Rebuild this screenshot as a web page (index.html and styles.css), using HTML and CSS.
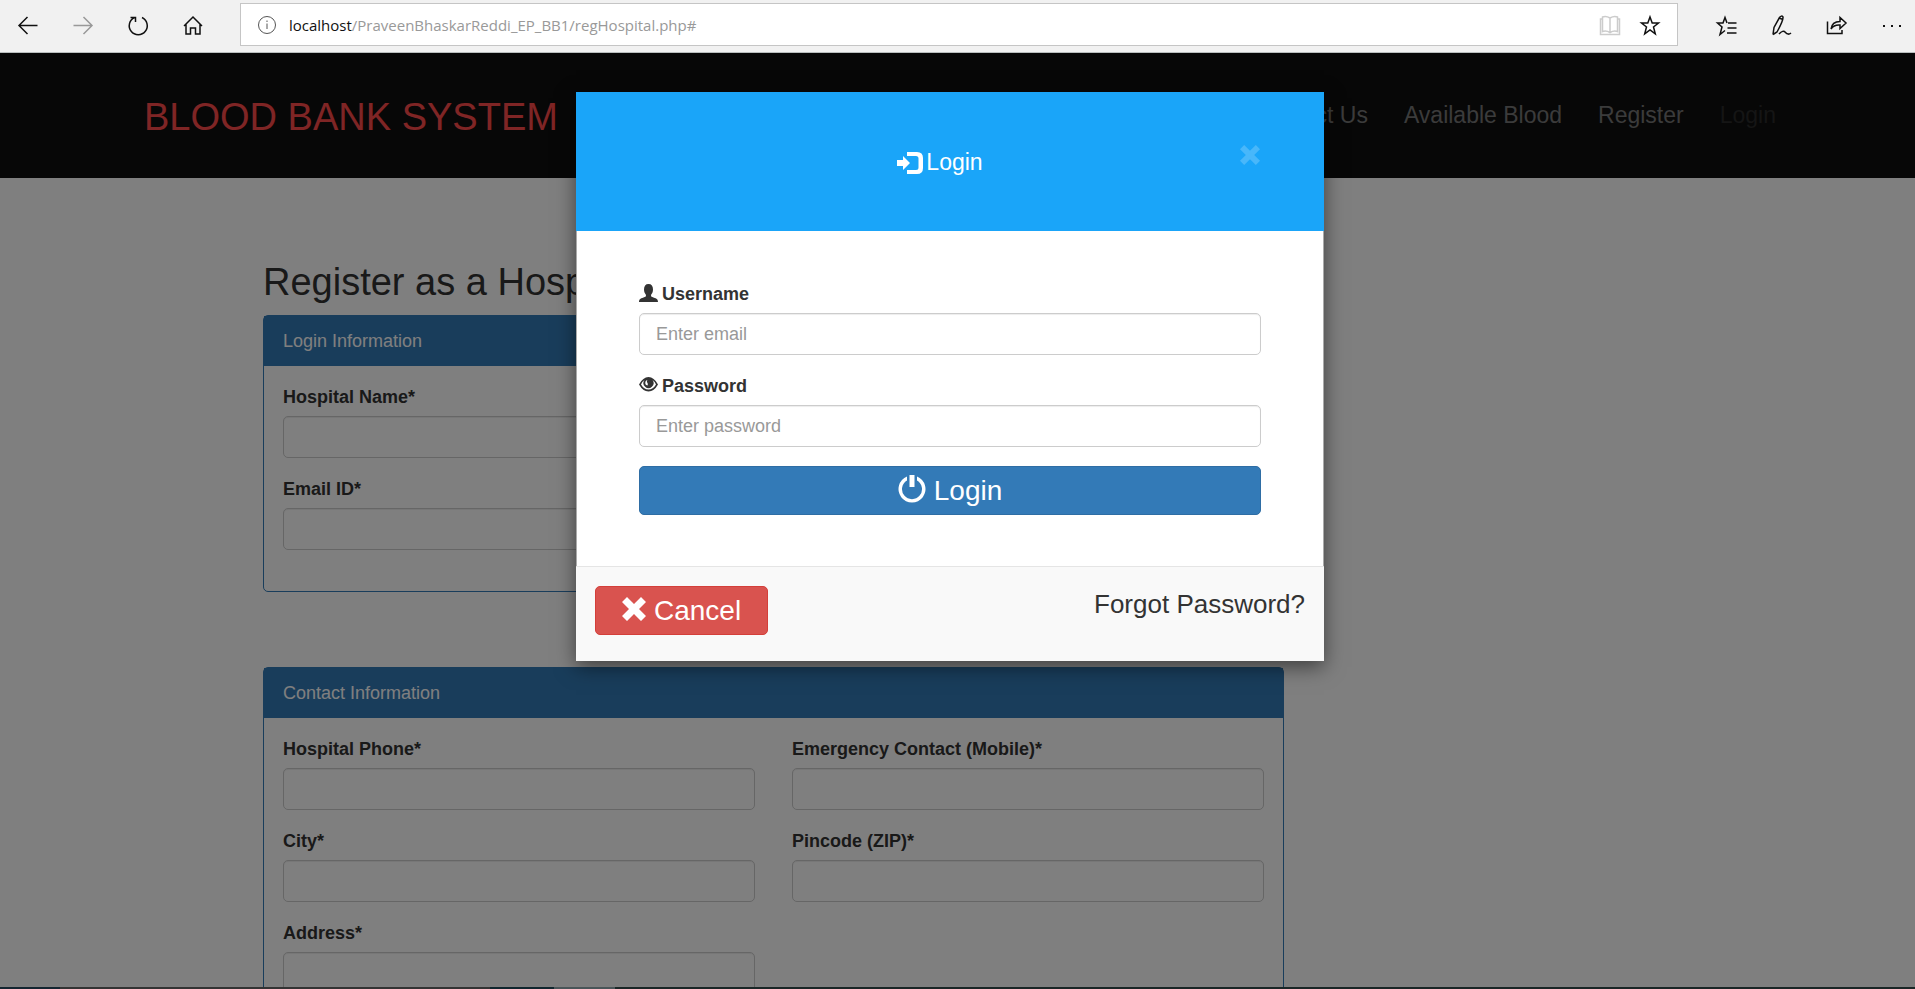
FILE: index.html
```html
<!DOCTYPE html>
<html lang="en">
<head>
<meta charset="utf-8">
<title>Blood Bank System</title>
<link rel="stylesheet" href="styles.css">
</head>
<body>
<header class="browser">
  <div class="browser-nav">
    <button class="tool" aria-label="Back"><svg viewBox="0 0 24 24"><path d="M21.500 12.500H3M11.500 4L3 12.500L11.500 21"/></svg></button>
    <button class="tool dim" aria-label="Forward"><svg viewBox="0 0 24 24"><path d="M2.500 12.500H21M12.500 4L21 12.500L12.500 21"/></svg></button>
    <button class="tool" aria-label="Refresh"><svg viewBox="0 0 24 24"><path d="M16 4.500A9 9 0 1 1 8.500 4.500M4.500 4.500H9.500V9"/></svg></button>
    <button class="tool" aria-label="Home"><svg viewBox="0 0 24 24"><path d="M3 13L12 4L21 13M5 11V21H9.500V15H14.500V21H19V11"/></svg></button>
  </div>
  <div class="address">
    <svg class="info" viewBox="0 0 24 24"><circle cx="12" cy="12" r="8.500"/><path d="M12 10.500V16M12 7.500V9"/></svg>
    <p class="url"><b>localhost</b>/PraveenBhaskarReddi_EP_BB1/regHospital.php#</p>
    <button class="tool faint" aria-label="Reading view"><svg viewBox="0 0 24 24"><path d="M12 5Q8 2.500 4.500 4V18.500Q8 17 12 19.500Q16 17 19.500 18.500V4Q16 2.500 12 5V19.500M4.500 6H2.500V21.500H21.500V6H19.500"/></svg></button>
    <button class="tool" aria-label="Add to favourites"><svg viewBox="0 0 24 24"><path d="M12 4L14.200 10H20.500L15.500 14L17.300 20.800L12 17L6.700 20.800L8.500 14L3.500 10H9.800Z"/></svg></button>
  </div>
  <div class="browser-tools">
    <button class="tool" aria-label="Hub"><svg viewBox="0 0 24 24"><path d="M13 10H21.500M12 10L10 4.500L8 10H2.500L7 14L5 21.500L10 17.500M12.500 15H21.500M12 20H21.500"/></svg></button>
    <button class="tool" aria-label="Notes"><svg viewBox="0 0 24 24"><path d="M3 21.500L4 14.500L9.500 4.500Q11.500 2 13 4Q13.500 7 7 19L3 21.500M9 5L13 6.500"/><path d="M9 21Q13 16.500 15.500 19.500T21 20"/></svg></button>
    <button class="tool" aria-label="Share"><svg viewBox="0 0 24 24"><path d="M2.500 8.500V20.500H17V17M6 16Q7 8.500 15 8.500V4.500L21 10L15 15.500V12Q9 11.500 6 16"/></svg></button>
    <button class="tool" aria-label="More"><svg viewBox="0 0 24 24"><path class="solid" d="M3 12h2v2H3zM11 12h2v2h-2zM19 12h2v2h-2z"/></svg></button>
  </div>
</header>

<div class="viewport">
  <nav class="navbar">
    <a class="brand" href="#">BLOOD BANK SYSTEM</a>
    <div class="links">
      <a href="#">Home</a>
      <a href="#">Contact Us</a>
      <a href="#">Available Blood</a>
      <a href="#">Register</a>
      <a class="active" href="#">Login</a>
    </div>
  </nav>

  <main class="page">
    <h1>Register as a Hospital</h1>
    <section class="panel panel-login">
      <h2>Login Information</h2>
      <div class="fields">
        <div class="field"><label for="hname">Hospital Name*</label><input id="hname" type="text"></div>
        <div class="field start"><label for="email">Email ID*</label><input id="email" type="text"></div>
      </div>
    </section>
    <section class="panel">
      <h2>Contact Information</h2>
      <div class="fields">
        <div class="field"><label for="phone">Hospital Phone*</label><input id="phone" type="text"></div>
        <div class="field"><label for="mobile">Emergency Contact (Mobile)*</label><input id="mobile" type="text"></div>
        <div class="field"><label for="city">City*</label><input id="city" type="text"></div>
        <div class="field"><label for="pin">Pincode (ZIP)*</label><input id="pin" type="text"></div>
        <div class="field"><label for="addr">Address*</label><textarea id="addr"></textarea></div>
      </div>
    </section>
  </main>
  <div class="backdrop"></div>

  <div class="modal" role="dialog" aria-labelledby="modal-title">
    <div class="modal-header">
      <h3 id="modal-title"><svg class="glyph" viewBox="0 0 26 22"><path d="M0 8h6V4l7 7-7 7v-4H0z"/><path d="M10 0h10q6 0 6 6v10q0 6-6 6H10v-4h9q2.500 0 2.500-2.500v-9Q21.500 4 19 4h-9z"/></svg>Login</h3>
      <button class="close" aria-label="Close"><svg viewBox="0 0 24 24"><path d="M5 0l7 7 7-7 5 5-7 7 7 7-5 5-7-7-7 7-5-5 7-7-7-7z"/></svg></button>
    </div>
    <form class="modal-body">
      <div class="field"><label for="user"><svg class="glyph" viewBox="0 0 19 19"><path d="M9.500 0C12.500 0 14 2 14 5.500C14 8 13 9.500 12 11C12 12.500 12.500 13 14.500 13.500C18 14.500 19 15.500 19 18H0C0 15.500 1 14.500 4.500 13.500C6.500 13 7 12.500 7 11C6 9.500 5 8 5 5.500C5 2 6.500 0 9.500 0Z"/></svg>Username</label><input id="user" type="text" placeholder="Enter email"></div>
      <div class="field"><label for="pass"><svg class="glyph" viewBox="0 0 19 19"><path fill-rule="evenodd" d="M0 8.500Q4 1 9.500 1T19 8.500Q15 15.500 9.500 15.500T0 8.500ZM2 8.500Q5 13.500 9.500 13.500T17 8.500Q16 5.500 13.500 4A5 5 0 1 1 5.500 4Q3 5.500 2 8.500ZM6.500 5.500Q5.500 9 8.500 9.500Q9.500 8 8 6Q7.500 5 8.500 4Q7 4 6.500 5.500Z"/></svg>Password</label><input id="pass" type="password" placeholder="Enter password"></div>
      <button type="button" class="btn btn-primary"><svg class="glyph" viewBox="0 0 28 28"><path d="M11.500 0h5v12h-5z"/><path d="M9 1.500v4a10 10 0 1 0 10 0v-4A13.500 13.500 0 1 1 9 1.500z"/></svg>Login</button>
    </form>
    <div class="modal-footer">
      <button type="button" class="btn btn-danger"><svg class="glyph" viewBox="0 0 24 24"><path d="M5 0l7 7 7-7 5 5-7 7 7 7-5 5-7-7-7 7-5-5 7-7-7-7z"/></svg>Cancel</button>
      <p>Forgot Password?</p>
    </div>
  </div>
</div>
<div class="taskbar"><i></i><i></i><i></i><i></i></div>
</body>
</html>
```
FILE: styles.css
```css
* { box-sizing: border-box; }
body {
  margin: 0;
  height: 100vh;
  display: flex;
  flex-direction: column;
  overflow: hidden;
  background: #fff;
  color: #333;
  font: 18px/25px "Liberation Sans", Arial, sans-serif;
}
h1, h2, h3, p { margin: 0; font-weight: 400; }
button { font: inherit; cursor: pointer; }
a { text-decoration: none; }

.browser {
  display: flex;
  flex: none;
  height: 53px;
  padding: 3px 11px 6px 16px;
  background: #f1f1f1;
  border-bottom: 1px solid #b9bebe;
}
.browser-nav, .browser-tools { display: flex; align-items: center; }
.browser-nav { gap: 31px; width: 224px; }
.browser-tools { gap: 31px; margin-left: 37px; }
.tool { border: 0; padding: 0; background: none; color: #111; width: 24px; height: 24px; }
.tool svg { display: block; width: 24px; height: 24px; }
.tool path, .info path, .info circle { fill: none; stroke: currentColor; stroke-width: 1.500; }
.info path, .info circle { stroke-width: 1; }
.tool .solid { fill: currentColor; stroke: none; }
.dim { color: #999; }
.faint { color: #ccc; }
.address {
  display: flex;
  flex: 1;
  align-items: center;
  gap: 16px;
  padding: 0 15px 0 14px;
  background: #fff;
  border: 1px solid #c5c5c5;
}
.info { width: 24px; height: 24px; color: #555; }
.url { flex: 1; margin-left: -6px; font: 15px/24px "Open Sans", "Noto Sans", sans-serif; color: #999; }
.url { margin-left: 0; }
.info + .url { padding-left: 0; }
.url b { font-weight: 400; color: #111; }
.address { gap: 10px; }
.address .tool + .tool { margin-left: 6px; }

.viewport { position: relative; flex: 1; min-height: 0; overflow: hidden; }
.navbar {
  display: flex;
  justify-content: space-between;
  align-items: center;
  height: 125px;
  padding: 0 139px 0 144px;
  background: #0e0e0e;
}
.brand { padding-top: 2px; font-size: 38px; line-height: 40px; color: #ff4a4a; }
.links { display: flex; gap: 36px; padding-bottom: 2px; font-size: 23px; line-height: 30px; }
.links a { color: #777; }
.links .active { color: #2a2a2a; }

.page { max-width: 1021px; margin: 83px 0 0 263px; }
h1 { font-size: 38px; line-height: 42px; margin-bottom: 12px; }
.panel { border: 1px solid #337ab7; border-radius: 5px; margin-bottom: 75px; }
.panel h2 { padding: 12px 19px; font-size: 18px; line-height: 26px; background: #337ab7; color: #fff; }
.fields { display: grid; grid-template-columns: 1fr 1fr; column-gap: 37px; row-gap: 19px; padding: 19px; }
.panel-login .fields { padding-bottom: 41px; }
.start { grid-column: 1; }
.field label { display: block; font-weight: 700; line-height: 25px; margin-bottom: 6px; }
.field input, .field textarea {
  display: block;
  width: 100%;
  height: 42px;
  padding: 7px 16px;
  font: inherit;
  color: #555;
  background: #fff;
  border: 1px solid #ccc;
  border-radius: 5px;
  box-shadow: inset 0 1px 1px rgba(0, 0, 0, .075);
  resize: none;
}
.field textarea { height: 80px; }
.field ::placeholder { color: #999; opacity: 1; }

.backdrop { position: absolute; inset: 0; background: rgba(0, 0, 0, .5); }

.modal {
  position: absolute;
  top: 39px;
  left: 0;
  right: 15px;
  max-width: 748px;
  margin: 0 auto;
  background: #fff;
  box-shadow: 0 6px 19px rgba(0, 0, 0, .5);
}
.glyph { flex: none; fill: currentColor; }
.modal-header { position: relative; background: #1aa5f9; color: #fff; padding: 55px 82px 53px 62px; }
.modal-header h3 { display: flex; justify-content: center; align-items: center; gap: 3px; font-size: 23px; line-height: 31px; }
.modal-header .glyph { width: 26px; height: 22px; }
.close { position: absolute; right: 64px; top: 53px; border: 0; padding: 0; background: none; color: #fff; opacity: .2; }
.close svg { display: block; width: 20px; height: 20px; fill: currentColor; }
.modal-body { display: grid; gap: 19px; padding: 51px 62px; border: 1px solid #aaa; border-width: 0 1px; }
.modal-body label { display: flex; align-items: center; gap: 4px; }
.modal-body label .glyph { width: 19px; height: 19px; margin-bottom: 2px; }
.btn {
  display: flex;
  justify-content: center;
  align-items: center;
  gap: 8px;
  height: 49px;
  border-radius: 5px;
  color: #fff;
  font-size: 28px;
  line-height: 36px;
}
.btn .glyph { margin-bottom: 4px; }
.btn-primary { background: #337ab7; border: 1px solid #2e6da4; }
.btn-primary .glyph { width: 28px; height: 28px; }
.btn-danger { background: #d9534f; border: 1px solid #d43f3a; padding: 0 26px; }
.btn-danger .glyph { width: 24px; height: 24px; }
.modal-footer {
  display: flex;
  justify-content: space-between;
  height: 95px;
  padding: 19px;
  background: #f9f9f9;
  border-top: 1px solid #e5e5e5;
}
.modal-footer p { font-size: 26px; line-height: 36px; }

.taskbar { display: flex; flex: none; height: 2px; background: #1a2626; }
.taskbar i { background: #333; }
.taskbar i:nth-child(1) { width: 60px; background: #142530; }
.taskbar i:nth-child(2) { width: 430px; }
.taskbar i:nth-child(3) { width: 64px; background: #10262e; }
.taskbar i:nth-child(4) { width: 61px; background: #4a5558; }
```
